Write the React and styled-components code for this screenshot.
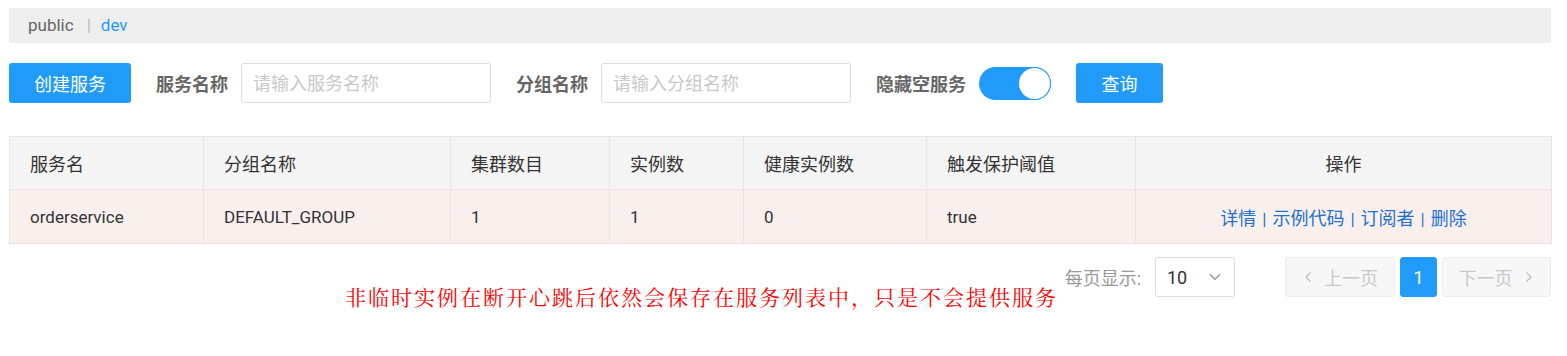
import React from "react";
import styled, { createGlobalStyle } from "styled-components";

const Global = createGlobalStyle`
  html, body { margin: 0; padding: 0; background: #fff; }
  body { font-family: Roboto, "Noto Sans CJK SC", "Noto Sans", sans-serif; color: #333; }
  * { box-sizing: border-box; }
`;

const Page = styled.div`
  padding: 8px 16px 0 9px;
  width: 1567px;
`;

const Crumbs = styled.div`
  height: 35px;
  background: #eeeeee;
  display: flex;
  align-items: center;
  padding-left: 19px;
  padding-bottom: 1px;
  font-size: 17px;
`;
const Crumb = styled.span`
  color: ${(p) => (p.$active ? "#209bfa" : "#666")};
`;
const Sep = styled.span`
  color: #bbb;
  margin: 0 10px 0 13px;
`;

const Toolbar = styled.div`
  display: flex;
  align-items: center;
  margin-top: 20px;
  height: 40px;
`;

const Button = styled.button`
  height: 40px;
  width: ${(p) => p.$w}px;
  border: none;
  border-radius: 3px;
  background: #209bfa;
  color: #fff;
  font-family: inherit;
  font-size: 18px;
  padding: 0;
  margin-right: ${(p) => p.$mr || 0}px;
`;

const Label = styled.span`
  font-weight: bold;
  color: #666;
  font-size: 18px;
  margin-right: ${(p) => p.$mr}px;
`;

const Input = styled.input`
  width: 250px;
  height: 40px;
  border: 1px solid #dcdcdc;
  border-radius: 3px;
  padding: 0 11px;
  font-family: inherit;
  font-size: 18px;
  color: #333;
  margin-right: 25px;
  outline: none;
  &::placeholder { color: #c8c8c8; }
`;

const Switch = styled.div`
  width: 72px;
  height: 33px;
  border-radius: 17px;
  background: #209bfa;
  position: relative;
  margin-right: 25px;
`;
const Knob = styled.span`
  position: absolute;
  right: 1px;
  top: 1px;
  width: 31px;
  height: 31px;
  border-radius: 50%;
  background: #fff;
  box-shadow: 0 0 0 1px #209bfa;
`;

const Table = styled.table`
  margin-top: 33px;
  width: 100%;
  border-collapse: collapse;
  table-layout: fixed;
  border: 1px solid #e6e6e6;
`;
const Th = styled.th`
  height: 53px;
  background: #f4f4f4;
  border: 1px solid #e6e6e6;
  font-weight: normal;
  font-size: 18px;
  color: #333;
  text-align: ${(p) => (p.$center ? "center" : "left")};
  padding: 0 20px;
`;
const Td = styled.td`
  height: 54px;
  background: #f9f0ee;
  border: 1px solid #e6e6e6;
  font-size: 17px;
  color: #333;
  text-align: ${(p) => (p.$center ? "center" : "left")};
  padding: 0 20px;
`;
const Link = styled.a`
  color: #1f70cf;
  font-size: 18px;
  text-decoration: none;
`;
const Bar = styled.span`
  color: #1f70cf;
  margin: 0 6px;
`;

const Footer = styled.div`
  display: flex;
  align-items: flex-start;
  margin-top: 13px;
  padding-left: 336px;
`;
const Note = styled.div`
  margin-top: 24px;
  color: #ff0000;
  font-family: "Noto Serif CJK SC", "Liberation Serif", "Noto Sans CJK SC", serif;
  font-size: 21px;
  letter-spacing: 2px;
  white-space: nowrap;
`;
const Pager = styled.div`
  margin-left: auto;
  display: flex;
  align-items: center;
  height: 40px;
`;
const PagerLabel = styled.span`
  color: #999;
  font-size: 18px;
  margin-right: 14px;
`;
const Select = styled.div`
  width: 80px;
  height: 40px;
  border: 1px solid #dcdcdc;
  border-radius: 3px;
  display: flex;
  align-items: center;
  justify-content: space-between;
  padding: 0 12px 0 11px;
  font-size: 18px;
  color: #333;
  margin-right: 50px;
`;
const PageBtn = styled.div`
  height: 40px;
  width: ${(p) => p.$w}px;
  border-radius: 3px;
  display: flex;
  align-items: center;
  justify-content: center;
  gap: 10px;
  font-size: 18px;
  margin-left: ${(p) => p.$ml || 0}px;
  background: ${(p) => (p.$active ? "#209bfa" : "#f7f7f7")};
  border: 1px solid ${(p) => (p.$active ? "#209bfa" : "#ececec")};
  color: ${(p) => (p.$active ? "#fff" : "#c8c8c8")};
`;

const Chevron = ({ dir, color = "#c0c0c0", size = 12 }) => {
  const d =
    dir === "down"
      ? "M2 4 L6 8 L10 4"
      : dir === "left"
      ? "M8 2 L4 6 L8 10"
      : "M4 2 L8 6 L4 10";
  return (
    <svg width={size} height={size} viewBox="0 0 12 12" fill="none">
      <path d={d} stroke={color} strokeWidth="1.3" strokeLinecap="round" strokeLinejoin="round" />
    </svg>
  );
};

const cols = [194, 247, 159, 134, 183, 209, 416];

export default function App() {
  return (
    <Page>
      <Global />
      <Crumbs>
        <Crumb>public</Crumb>
        <Sep>|</Sep>
        <Crumb $active>dev</Crumb>
      </Crumbs>
      <Toolbar>
        <Button $w={122} $mr={25}>创建服务</Button>
        <Label $mr={13}>服务名称</Label>
        <Input placeholder="请输入服务名称" />
        <Label $mr={13}>分组名称</Label>
        <Input placeholder="请输入分组名称" />
        <Label $mr={13}>隐藏空服务</Label>
        <Switch>
          <Knob />
        </Switch>
        <Button $w={87}>查询</Button>
      </Toolbar>
      <Table>
        <colgroup>
          {cols.map((w, i) => (
            <col key={i} style={{ width: w }} />
          ))}
        </colgroup>
        <thead>
          <tr>
            <Th>服务名</Th>
            <Th>分组名称</Th>
            <Th>集群数目</Th>
            <Th>实例数</Th>
            <Th>健康实例数</Th>
            <Th>触发保护阈值</Th>
            <Th $center>操作</Th>
          </tr>
        </thead>
        <tbody>
          <tr>
            <Td>orderservice</Td>
            <Td>DEFAULT_GROUP</Td>
            <Td>1</Td>
            <Td>1</Td>
            <Td>0</Td>
            <Td>true</Td>
            <Td $center>
              <Link>详情</Link>
              <Bar>|</Bar>
              <Link>示例代码</Link>
              <Bar>|</Bar>
              <Link>订阅者</Link>
              <Bar>|</Bar>
              <Link>删除</Link>
            </Td>
          </tr>
        </tbody>
      </Table>
      <Footer>
        <Note>非临时实例在断开心跳后依然会保存在服务列表中，只是不会提供服务</Note>
        <Pager>
          <PagerLabel>每页显示:</PagerLabel>
          <Select>
            <span>10</span>
            <Chevron dir="down" color="#999" size={14} />
          </Select>
          <PageBtn $w={110}>
            <Chevron dir="left" />
            <span>上一页</span>
          </PageBtn>
          <PageBtn $w={37} $ml={5} $active>1</PageBtn>
          <PageBtn $w={109} $ml={5}>
            <span>下一页</span>
            <Chevron dir="right" />
          </PageBtn>
        </Pager>
      </Footer>
    </Page>
  );
}
